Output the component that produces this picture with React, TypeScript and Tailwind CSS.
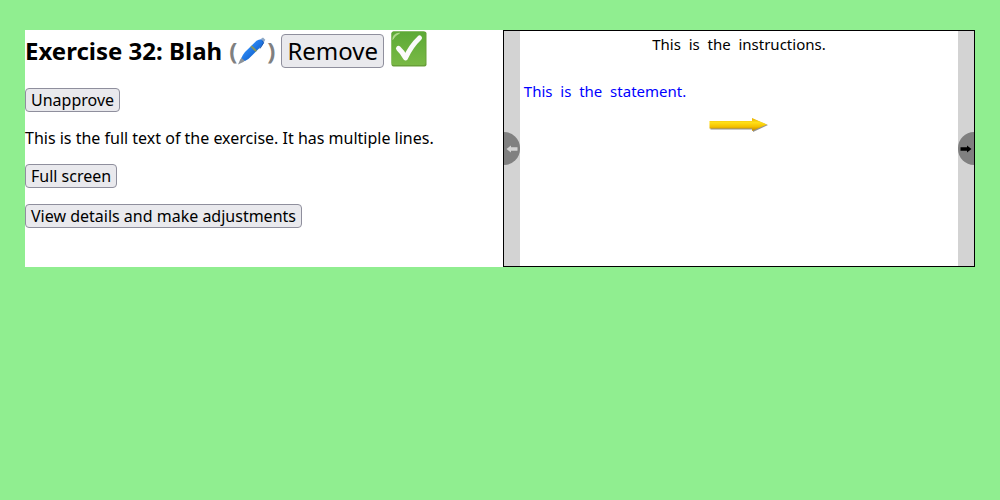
import type { ReactNode } from "react";

function Button({ children, large = false }: { children: ReactNode; large?: boolean }) {
  return (
    <button
      type="button"
      className={
        large
          ? "h-[34px] rounded border border-[#8f8f9d] bg-[#e9e9ed] px-[5px] text-2xl leading-8 font-normal"
          : "h-6 rounded border border-[#8f8f9d] bg-[#e9e9ed] px-[5px] text-base leading-[22px]"
      }
    >
      {children}
    </button>
  );
}

function Pen() {
  return (
    <svg viewBox="0 0 30 28" className="h-7 w-[30px]" role="img" aria-label="Edit">
      <defs>
        <linearGradient id="pen" x1="0" y1="0" x2="1" y2="1">
          <stop offset="0.35" stopColor="#2a86f2" />
          <stop offset="0.7" stopColor="#1565d0" />
        </linearGradient>
      </defs>
      <path d="M1 27.500 L3.200 22.500 L4.800 20.500 L8.200 23.500 L6.300 25 Z" fill="#8b9299" />
      <path d="M4.400 21 Q5.500 18 8 15 L19.500 3.800 Q22.500 1.600 25.500 2.300 Q27.500 4 26 7.500 L15 18.500 Q11.500 22.500 8 24 Z" fill="url(#pen)" />
      <path d="M23.800 2 L26 0.600 L28.300 2.800 L27 5 Z" fill="#8da8c5" />
      <path d="M14.800 8.400 L20 13.500 L18.600 14.900 L13.400 9.900 Z" fill="#83945f" />
      <path d="M25.300 3.800 L26.600 5.800 L23 11.500" fill="none" stroke="#1a57b0" strokeWidth="1" />
    </svg>
  );
}

function Check() {
  return (
    <svg viewBox="0 0 36 36" className="h-9 w-9" role="img" aria-label="Approved">
      <defs>
        <linearGradient id="check" x1="0" y1="0" x2="0" y2="1">
          <stop offset="0" stopColor="#5ca936" />
          <stop offset="1" stopColor="#79b945" />
        </linearGradient>
      </defs>
      <rect x="0.500" y="0.500" width="35" height="35" rx="2" fill="#689f38" />
      <rect x="0.500" y="0.500" width="34" height="33.500" rx="2" fill="url(#check)" />
      <path d="M1.800 8.500 Q1.800 2.500 8.500 2.200 Q4 4 1.800 8.500 Z" fill="#b4dc91" stroke="#b4dc91" strokeWidth="0.800" />
      <path
        d="M7.500 17.500 Q11.500 21 14.500 27 Q20 15 28.500 7"
        fill="none"
        stroke="#fafafa"
        strokeWidth="5"
        strokeLinecap="round"
        strokeLinejoin="round"
      />
    </svg>
  );
}

function GoldArrow() {
  return (
    <svg viewBox="0 0 62 18" className="h-[18px] w-[62px]" aria-hidden="true">
      <defs>
        <linearGradient id="gold" x1="0" y1="0" x2="0" y2="1">
          <stop offset="0" stopColor="#e8ae00" />
          <stop offset="0.35" stopColor="#ffdf18" />
          <stop offset="0.65" stopColor="#f5c300" />
          <stop offset="1" stopColor="#bd8100" />
        </linearGradient>
        <filter id="soft" x="-10%" y="-30%" width="120%" height="170%">
          <feGaussianBlur stdDeviation="0.7" />
        </filter>
      </defs>
      <path d="M2.500 7 H45 V4 L60 10 L45 17 V14.500 H2.500 Z" fill="#666" opacity="0.7" filter="url(#soft)" />
      <path d="M1.500 6 H44 V3 L59 9.500 L44 16 V13.500 H1.500 Z" fill="url(#gold)" />
    </svg>
  );
}

function SmallArrow({ back = false }: { back?: boolean }) {
  return (
    <svg viewBox="0 0 12 8" className="h-2 w-3" aria-hidden="true">
      {back ? (
        <path d="M0.500 4 L5 0.500 V2.300 H11.500 V5.700 H5 V7.500 Z" fill="#d3d3d3" />
      ) : (
        <path d="M11.500 4 L7 0.500 V2.300 H0.500 V5.700 H7 V7.500 Z" fill="#000" />
      )}
    </svg>
  );
}

export default function App() {
  return (
    <main className="min-h-screen bg-[#90ee90] px-[25px] py-[30px] font-['Noto_Sans',sans-serif] text-base text-black">
      <div className="flex bg-white">
        <section className="min-w-0 flex-1">
          <h1 className="flex h-[42px] items-center text-2xl font-bold whitespace-nowrap">
            <span>Exercise 32: Blah</span>
            <span className="ml-[7px] flex items-center text-[#808080]">
              (<Pen />)
            </span>
            <span className="mr-[7px] ml-1.5 flex">
              <Button large>Remove</Button>
            </span>
            <span className="pb-1">
              <Check />
            </span>
          </h1>
          <div className="mt-4 flex flex-col items-start gap-4">
            <Button>Unapprove</Button>
            <p className="leading-5 whitespace-nowrap">
              This is the full text of the exercise. It has multiple lines.
            </p>
            <Button>Full screen</Button>
            <Button>View details and make adjustments</Button>
          </div>
        </section>

        <section className="flex aspect-[472/237] w-[49.7%] border border-black text-[15px] leading-5">
          <div className="flex w-4 items-center bg-[#d3d3d3]">
            <button
              type="button"
              disabled
              aria-label="Previous"
              className="flex h-[33px] w-4 items-center justify-center rounded-r-full bg-[#808080]"
            >
              <SmallArrow back />
            </button>
          </div>
          <div className="flex flex-1 flex-col px-1 pt-[3px]">
            <p className="text-center whitespace-pre">This  is  the  instructions.</p>
            <p className="mt-[27px] text-[#0000ff] whitespace-pre">This  is  the  statement.</p>
            <div className="mt-3.5 flex justify-center">
              <GoldArrow />
            </div>
          </div>
          <div className="flex w-4 items-center bg-[#d3d3d3]">
            <button
              type="button"
              aria-label="Next"
              className="flex h-[33px] w-4 items-center justify-center rounded-l-full bg-[#808080]"
            >
              <SmallArrow />
            </button>
          </div>
        </section>
      </div>
    </main>
  );
}
